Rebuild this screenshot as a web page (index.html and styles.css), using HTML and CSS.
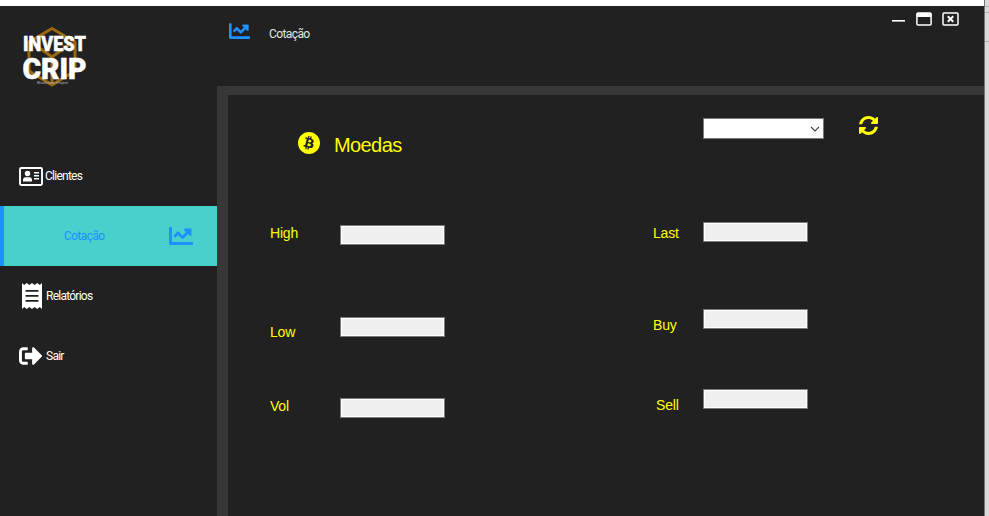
FILE: index.html
```html
<!DOCTYPE html>
<html lang="pt-BR">
<head>
<meta charset="utf-8">
<title>Invest Crip</title>
<link rel="stylesheet" href="styles.css">
</head>
<body>
<svg class="defs" aria-hidden="true">
  <symbol id="chart" viewBox="0 64 512 384"><path d="M496 384H64V80c0-8.84-7.16-16-16-16H16C7.16 64 0 71.16 0 80v336c0 17.67 14.33 32 32 32h464c8.84 0 16-7.16 16-16v-32c0-8.84-7.16-16-16-16zM464 96H345.94c-21.38 0-32.09 25.85-16.97 40.97l32.4 32.4L288 242.75l-73.37-73.37c-12.5-12.5-32.76-12.5-45.25 0l-68.69 68.69c-6.25 6.25-6.25 16.38 0 22.63l22.62 22.62c6.25 6.25 16.38 6.25 22.63 0L192 237.25l73.37 73.37c12.5 12.5 32.76 12.5 45.25 0l96-96 32.4 32.4c15.12 15.12 40.97 4.41 40.97-16.97V112c.01-8.84-7.15-16-15.99-16z"/></symbol>
</svg>
<div class="screen">
  <div class="window">
    <aside class="sidebar">
      <svg class="logo" viewBox="0 0 70 64">
        <path class="hex" d="M32 4.500 55 18V47L32 61 9 47V18ZM14 20 32 33 50 20M32 33V60"/>
        <text class="brand" x="3" y="26.500" font-size="19.500" textLength="63" lengthAdjust="spacingAndGlyphs">INVEST</text>
        <text class="brand" x="2.500" y="54.800" font-size="30" textLength="64" lengthAdjust="spacingAndGlyphs">CRIP</text>
        <text class="tagline" x="17" y="60" font-size="4" textLength="31">Blockchain Project</text>
      </svg>
      <nav class="menu">
        <a class="item clients">
          <svg viewBox="0 0 24 19" width="24" height="19"><rect x="1" y="1" width="22" height="17" rx="1.2" fill="none" stroke="#fff" stroke-width="1.9"/><circle cx="8.5" cy="6.500" r="2.700"/><path d="M4 14.500v-1.300Q4 10.300 6.500 10.300h4Q13 10.300 13 13.200v1.300zM15 5h5v1.500h-5zM15 8h5v1.500h-5zM15 11h5v1.500h-5z"/></svg>
          <span>Clientes</span>
        </a>
        <a class="item active"><span>Cotação</span><svg width="24" height="18"><use href="#chart"/></svg></a>
        <a class="item reports">
          <svg viewBox="0 0 20 26" width="20" height="26"><path fill-rule="evenodd" d="M0 0 2.200 2 4.800 0 7.400 2 10 0l2.600 2 2.600-2 2.600 2L20 0v26l-2.200-2-2.600 2-2.600-2-2.600 2-2.600-2-2.600 2-2.600-2L0 26ZM3.500 7v1.700h13V7ZM3.500 12v1.700h13V12ZM3.500 17v1.700h13V17Z"/></svg>
          <span>Relatórios</span>
        </a>
        <a class="item exit">
          <svg viewBox="0 64 504 384" width="23" height="18"><path d="M497 273L329 441c-15 15-41 4.500-41 -17v-96H152c-13.300 0-24-10.700-24-24v-96c0-13.300 10.700-24 24-24h136V88c0-21.400 25.900-32 41-17l168 168c9.300 9.400 9.300 24.600 0 34zM192 436v-40c0-6.600-5.400-12-12-12H96c-17.700 0-32-14.300-32-32V160c0-17.700 14.300-32 32-32h84c6.600 0 12-5.400 12-12V76c0-6.600-5.400-12-12-12H96c-53 0-96 43-96 96v192c0 53 43 96 96 96h84c6.600 0 12-5.400 12-12z"/></svg>
          <span>Sair</span>
        </a>
      </nav>
    </aside>
    <section class="content">
      <header class="topbar">
        <svg class="page-icon" width="21" height="16"><use href="#chart"/></svg>
        <h1>Cotação</h1>
        <div class="controls">
          <svg viewBox="0 0 13 2" width="13" height="2"><path d="M0 0h13v1.600H0z"/></svg>
          <svg viewBox="0 0 16 14" width="16" height="14"><rect x=".9" y=".9" width="14.200" height="12.200" rx="1" fill="none" stroke="#fff" stroke-width="1.500"/><path d="M1 1h14v4H1z"/></svg>
          <svg viewBox="0 0 17 14" width="17" height="14"><rect x="1" y=".9" width="15" height="12.200" rx="1" fill="none" stroke="#fff" stroke-width="1.500"/><path d="m5.800 4.300 5.400 5.400m0-5.400-5.400 5.400" stroke="#fff" stroke-width="2"/></svg>
        </div>
      </header>
      <main class="panel">
        <div class="heading">
          <svg class="coin" viewBox="8 8 496 496" width="22" height="22"><path d="M504 256c0 136.967-111.033 248-248 248S8 392.967 8 256 119.033 8 256 8s248 111.033 248 248zm-141.651-35.330c4.937-32.999-20.191-50.739-54.550-62.573l11.146-44.702-27.213-6.781-10.851 43.524c-7.154-1.783-14.502-3.464-21.803-5.130l10.929-43.810-27.198-6.781-11.153 44.686c-5.922-1.349-11.735-2.682-17.377-4.084l.031-.140-37.530-9.370-7.239 29.062s20.191 4.627 19.765 4.913c11.022 2.751 13.014 10.044 12.680 15.825l-12.696 50.925c.760.194 1.744.473 2.829.907-.907-.225-1.876-.473-2.876-.713l-17.796 71.338c-1.349 3.348-4.767 8.370-12.471 6.464.271.395-19.780-4.937-19.780-4.937l-13.510 31.147 35.414 8.827c6.588 1.651 13.045 3.379 19.400 5.006l-11.262 45.213 27.182 6.781 11.153-44.733a1038.209 1038.209 0 0 0 21.687 5.627l-11.115 44.523 27.213 6.781 11.262-45.128c46.404 8.781 81.299 5.239 95.986-36.727 11.834-33.790-.589-53.281-25.004-65.991 17.780-4.098 31.174-15.792 34.747-39.949zm-62.177 87.179c-8.410 33.790-65.308 15.523-83.755 10.943l14.944-59.899c18.446 4.603 77.600 13.717 68.811 48.956zm8.417-87.667c-7.673 30.736-55.031 15.120-70.393 11.292l13.548-54.327c15.363 3.828 64.836 10.973 56.845 43.035z"/></svg>
          <h2>Moedas</h2>
          <div class="select"><svg viewBox="0 0 10 6" width="10" height="6"><path d="m1 1 4 4 4-4" fill="none" stroke="#444" stroke-width="1.100"/></svg></div>
          <svg class="refresh" viewBox="8 8 496 496" width="19" height="19"><path d="M370.720 133.280C339.458 104.008 298.888 87.962 255.848 88c-77.458.068-144.328 53.178-162.791 126.850-1.344 5.363-6.122 9.150-11.651 9.150H24.103c-7.498 0-13.194-6.807-11.807-14.176C33.933 94.924 134.813 8 256 8c66.448 0 126.791 26.136 171.315 68.685L463.030 40.970C478.149 25.851 504 36.559 504 57.941V192c0 13.255-10.745 24-24 24H345.941c-21.382 0-32.090-25.851-16.971-40.971l41.750-41.749zM32 296h134.059c21.382 0 32.090 25.851 16.971 40.971l-41.750 41.750c31.262 29.273 71.835 45.319 114.876 45.280 77.418-.070 144.315-53.144 162.787-126.849 1.344-5.363 6.122-9.150 11.651-9.150h57.304c7.498 0 13.194 6.807 11.807 14.176C478.067 417.076 377.187 504 256 504c-66.448 0-126.791-26.136-171.315-68.685L48.970 471.030C33.851 486.149 8 475.441 8 454.059V320c0-13.255 10.745-24 24-24z"/></svg>
        </div>
        <div class="fields">
          <div class="column left">
            <div class="field high"><span>High</span><div class="box"></div></div>
            <div class="field low"><span>Low</span><div class="box"></div></div>
            <div class="field vol"><span>Vol</span><div class="box"></div></div>
          </div>
          <div class="column right">
            <div class="field last"><span>Last</span><div class="box"></div></div>
            <div class="field buy"><span>Buy</span><div class="box"></div></div>
            <div class="field sell"><span>Sell</span><div class="box"></div></div>
          </div>
        </div>
      </main>
    </section>
  </div>
  <div class="edge"><i></i><i></i><i></i></div>
</div>
</body>
</html>
```
FILE: styles.css
```css
* { box-sizing: border-box; }
body { margin: 0; background: #fff; overflow: hidden; }
svg { display: block; flex: none; fill: currentColor; }
.defs { position: absolute; width: 0; height: 0; }
.screen { display: flex; width: 989px; height: 516px; }
.window { display: flex; width: 984px; height: 510px; margin-top: 6px; background: #212121; color: #fff; }

.sidebar { width: 217px; flex: none; font: 12px/16px Roboto, sans-serif; }
.logo { width: 70px; height: 64px; margin: 18px 0 0 20px; overflow: visible; }
.hex { fill: none; stroke: #9a690f; stroke-width: 3; }
.brand { font-family: Roboto, sans-serif; font-weight: 900; fill: #fff; stroke: #fff; stroke-width: .5; }
.tagline { font-family: Roboto, sans-serif; fill: #aaa; }
.menu { margin-top: 58px; }
.item { display: flex; align-items: center; height: 60px; padding-left: 19px; }
.item span { letter-spacing: -.75px; }
.clients { gap: 2px; }
.reports { gap: 4px; padding-left: 22px; }
.exit { gap: 4px; }
.active { justify-content: space-between; padding: 0 24px 0 60px; border-left: 4px solid #1e90ff; background: #48d1cc; color: #1e90ff; }
.active span { letter-spacing: -.6px; }

.content { width: 767px; display: flex; flex-direction: column; }
.topbar { display: flex; align-items: flex-start; height: 80px; }
.page-icon { margin: 17px 0 0 12px; color: #1e90ff; }
h1 { margin: 20px 0 0 19px; font: 12px/16px Roboto, sans-serif; letter-spacing: -.6px; color: #e4e4e4; }
.controls { display: flex; align-items: center; margin: 6px 24px 0 auto; }
.controls svg:nth-child(1) { margin: 4px 11px 0 0; }
.controls svg:nth-child(2) { margin-right: 10px; }
.controls { padding-right: 1px; }
.panel { flex: 1; border: solid #373737; border-width: 9px 0 0 11px; color: #ff0; font-family: "Liberation Sans", Arial, sans-serif; }

.heading { display: flex; align-items: flex-start; height: 127px; padding-left: 70px; }
.coin { margin-top: 37px; }
h2 { width: 369px; margin: 38px 0 0 14px; font-size: 20px; font-weight: 400; line-height: 24px; letter-spacing: -.6px; }
.select { display: flex; align-items: center; justify-content: flex-end; width: 121px; height: 21px; margin-top: 23px; padding-right: 3px; border: 1px solid #7a7a7a; background: #fff; }
.refresh { margin: 21px 0 0 35px; }

.fields { display: flex; padding-left: 42px; }
.column { width: 383px; flex: none; }
.column.right { width: 160px; }
.field { display: flex; align-items: flex-start; font-size: 14px; line-height: 16px; }
.field span { width: 70px; letter-spacing: -.2px; }
.box { width: 105px; height: 20px; border: 1px solid #7a7a7a; background: #f0f0f0; box-shadow: inset 0 0 0 1px #fff; }
.left .box { margin-top: 3px; }
.high { height: 92px; }
.high span { margin-top: 3px; }
.low { height: 81px; }
.low span { margin-top: 10px; }
.vol span { margin-top: 3px; }
.right .field span { width: 50px; }
.last { height: 87px; }
.last span { margin-top: 3px; }
.buy { height: 80px; }
.buy span { margin-top: 8px; }
.right .sell span { width: 47px; margin: 8px 0 0 3px; }

.edge { display: flex; flex-direction: column; width: 5px; border-left: 1px solid #777; background: #dadada; }
.edge i { border-bottom: 1px solid #b4b4b4; }
.edge i:nth-child(1) { height: 7px; }
.edge i:nth-child(2) { height: 6px; }
.edge i:nth-child(3) { height: 29px; }
```
